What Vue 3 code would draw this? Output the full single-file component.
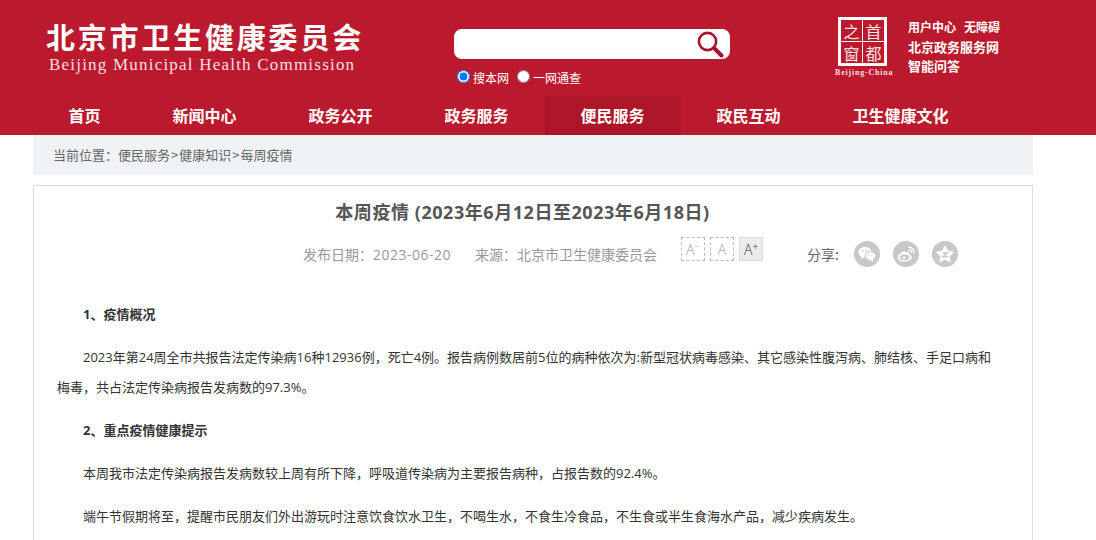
<script setup>
const navItems = ['首页', '新闻中心', '政务公开', '政务服务', '便民服务', '政民互动', '卫生健康文化']
const activeNav = '便民服务'
const crumbs = ['便民服务', '健康知识', '每周疫情']
</script>

<template>
  <div class="page">
    <header class="header">
      <div class="header-top">
        <div class="brand">
          <div class="brand-cn">北京市卫生健康委员会</div>
          <div class="brand-en">Beijing Municipal Health Commission</div>
        </div>
        <div class="search">
          <div class="search-box">
            <svg class="search-icon" width="28" height="28" viewBox="0 0 28 28">
              <circle cx="11.5" cy="11.5" r="8.6" fill="none" stroke="#a8132c" stroke-width="2.6" />
              <path d="M18 18 L25.5 25.5" stroke="#a8132c" stroke-width="4" stroke-linecap="round" />
            </svg>
          </div>
          <div class="search-scope">
            <label class="scope"><input type="radio" name="scope" checked />搜本网</label>
            <label class="scope"><input type="radio" name="scope" />一网通查</label>
          </div>
        </div>
        <div class="stamp">
          <div class="stamp-box">
            <span>之</span><span>首</span><span>窗</span><span>都</span>
          </div>
          <div class="stamp-en">Beijing-China</div>
        </div>
        <div class="quick-links">
          <div class="quick-row small"><a>用户中心</a><a>无障碍</a></div>
          <div class="quick-row"><a>北京政务服务网</a></div>
          <div class="quick-row"><a>智能问答</a></div>
        </div>
      </div>
      <nav class="nav">
        <a v-for="item in navItems" :key="item" class="nav-item" :class="{ active: item === activeNav }">{{ item }}</a>
      </nav>
    </header>

    <div class="crumbs">
      当前位置：<template v-for="(crumb, i) in crumbs" :key="crumb"><span v-if="i" class="crumb-sep">&gt;</span>{{ crumb }}</template>
    </div>

    <main class="article">
      <h1 class="title">本周疫情 (2023年6月12日至2023年6月18日)</h1>
      <div class="meta">
        <span class="meta-text">发布日期：<span class="meta-date">2023-06-20</span></span>
        <span class="meta-text source">来源：北京市卫生健康委员会</span>
        <div class="font-btns">
          <span class="font-btn">A<sup>−</sup></span>
          <span class="font-btn">A</span>
          <span class="font-btn on">A<sup>+</sup></span>
        </div>
        <span class="share-label">分享:</span>
        <div class="share-icons">
          <span class="share-icon">
            <svg width="20" height="20" viewBox="0 0 20 20">
              <ellipse cx="8" cy="8.2" rx="6.6" ry="5.4" fill="#fff" />
              <path d="M4.5 12 L4 15 L7.4 13z" fill="#fff" />
              <ellipse cx="13.4" cy="12" rx="5.4" ry="4.4" fill="#fff" stroke="#c8c8c8" stroke-width="1" />
              <path d="M15.5 15.5 L16.6 18 L13.6 16.2z" fill="#fff" />
              <circle cx="5.9" cy="6.8" r="0.9" fill="#c8c8c8" />
              <circle cx="9.9" cy="6.8" r="0.9" fill="#c8c8c8" />
              <circle cx="11.6" cy="11.2" r="0.7" fill="#c8c8c8" />
              <circle cx="15" cy="11.2" r="0.7" fill="#c8c8c8" />
            </svg>
          </span>
          <span class="share-icon">
            <svg width="20" height="20" viewBox="0 0 20 20">
              <path d="M8.6 7 C4.8 8 1.5 11 1.8 13.8 C2.1 16.6 5.6 18.2 9.2 17.8 C13 17.4 16 15.4 15.8 13 C15.6 11.4 14 11 13.2 10.6 C13.6 9.4 13.6 8.4 12.6 8 C11.6 7.6 10 8 8.8 8.6 C9.2 7.6 9.2 7 8.6 7z" fill="#fff" />
              <ellipse cx="8.6" cy="13.6" rx="4.6" ry="3" fill="#c8c8c8" />
              <circle cx="8" cy="13.8" r="1.6" fill="#fff" />
              <path d="M12.8 3.4 C15.8 3 18.4 5.4 17.8 8.8" fill="none" stroke="#fff" stroke-width="1.5" stroke-linecap="round" />
              <path d="M13.2 6 C14.6 5.8 15.8 6.8 15.5 8.4" fill="none" stroke="#fff" stroke-width="1.3" stroke-linecap="round" />
            </svg>
          </span>
          <span class="share-icon">
            <svg width="20" height="20" viewBox="0 0 20 20">
              <path d="M10 2.5 L12.4 7.6 L17.8 8.3 L13.8 12 L14.8 17.2 L10 14.6 L5.2 17.2 L6.2 12 L2.2 8.3 L7.6 7.6z" fill="#fff" stroke="#fff" stroke-width="1.6" stroke-linejoin="round" />
              <path d="M7.6 8.8 H12.2 L8 12.6 H12.6" fill="none" stroke="#c8c8c8" stroke-width="1.6" />
            </svg>
          </span>
        </div>
      </div>
      <div class="content">
        <p class="strong">1、疫情概况</p>
        <p>2023年第24周全市共报告法定传染病16种12936例，死亡4例。报告病例数居前5位的病种依次为:新型冠状病毒感染、其它感染性腹泻病、肺结核、手足口病和梅毒，共占法定传染病报告发病数的97.3%。</p>
        <p class="strong">2、重点疫情健康提示</p>
        <p>本周我市法定传染病报告发病数较上周有所下降，呼吸道传染病为主要报告病种，占报告数的92.4%。</p>
        <p>端午节假期将至，提醒市民朋友们外出游玩时注意饮食饮水卫生，不喝生水，不食生冷食品，不生食或半生食海水产品，减少疾病发生。</p>
      </div>
    </main>
  </div>
</template>

<style>
html, body {
  height: 540px;
  overflow: hidden;
  background: #fff;
}
</style>

<style scoped>
.page {
  font-family: "Open Sans", "Noto Sans CJK SC", sans-serif;
  color: #333;
}

.header {
  height: 135px;
  background: #bb1a2e;
  color: #fff;
}

.header-top {
  height: 96px;
  display: flex;
  padding-left: 46px;
}

.brand {
  width: 408px;
  padding-top: 19px;
}

.brand-cn {
  font-family: "Noto Sans CJK SC", sans-serif;
  font-size: 29px;
  line-height: 34px;
  font-weight: 700;
  letter-spacing: 2.8px;
  white-space: nowrap;
}

.brand-en {
  font-family: "Liberation Serif", serif;
  font-size: 17px;
  line-height: 20px;
  letter-spacing: 1.21px;
  margin-top: 2px;
  padding-left: 3px;
  color: #f6dfe2;
  white-space: nowrap;
}

.search {
  width: 383px;
  padding-top: 29px;
}

.search-box {
  width: 276px;
  height: 30px;
  background: #fff;
  border-radius: 8px;
  display: flex;
  align-items: center;
  justify-content: flex-end;
  padding-right: 6px;
  box-sizing: border-box;
}

.search-icon {
  display: block;
}

.search-scope {
  display: flex;
  gap: 8px;
  padding-left: 3px;
  margin-top: 10px;
}

.scope {
  display: flex;
  align-items: center;
  font-family: "Noto Sans CJK SC", sans-serif;
  font-size: 12px;
  line-height: 18px;
}

.scope input {
  width: 13px;
  height: 13px;
  margin: 0 3px 4px 0;
}

.stamp {
  width: 71px;
  padding-top: 17px;
  font-family: "Noto Sans CJK SC", sans-serif;
}

.stamp-box {
  width: 43px;
  height: 43px;
  margin-left: 1px;
  display: grid;
  grid-template-columns: 1fr 1fr;
  grid-template-rows: 1fr 1fr;
  gap: 1px;
  background: #fff;
  border: 3px solid #fff;
}

.stamp-box span {
  background: #bb1a2e;
  display: flex;
  align-items: center;
  justify-content: center;
  font-size: 16px;
  color: #f6e3e5;
  line-height: 1;
}

.stamp-en {
  font-family: "Liberation Serif", serif;
  font-size: 8px;
  line-height: 10px;
  font-weight: 700;
  letter-spacing: 0.8px;
  margin-top: 2px;
  margin-left: -2px;
  white-space: nowrap;
  color: #f6dfe2;
}

.quick-links {
  padding-top: 17px;
  font-family: "Noto Sans CJK SC", sans-serif;
  font-size: 13px;
  font-weight: 700;
}

.quick-row {
  display: flex;
  gap: 8px;
  height: 19.5px;
  line-height: 20px;
  white-space: nowrap;
}

.quick-row.small {
  font-size: 12px;
}

.nav {
  height: 39px;
  display: flex;
  margin-left: 32.5px;
}

.nav-item {
  padding: 0 36px;
  font-family: "Noto Sans CJK SC", sans-serif;
  font-size: 16px;
  font-weight: 700;
  line-height: 38px;
  white-space: nowrap;
}

.nav-item.active {
  background: #ad1529;
}

.crumbs {
  width: 1000px;
  height: 40px;
  box-sizing: border-box;
  margin-left: 33px;
  padding-left: 20px;
  background: #eff3f6;
  font-family: "Noto Sans CJK SC", sans-serif;
  font-size: 13px;
  line-height: 40px;
  color: #666;
}

.crumb-sep {
  padding: 0 1px;
}

.article {
  width: 1000px;
  box-sizing: border-box;
  margin: 10px 0 0 33px;
  border: 1px solid #ddd;
  padding: 0 23px;
}

.title {
  margin: 0;
  padding: 13px 21px 0 0;
  text-align: center;
  font-family: "Open Sans", "Noto Sans CJK SC", sans-serif;
  font-size: 18px;
  line-height: 26px;
  font-weight: 700;
  letter-spacing: 0.55px;
  color: #555;
}

.meta {
  display: flex;
  align-items: center;
  height: 34px;
  margin-top: 12px;
  padding-left: 246px;
  font-family: "Noto Sans CJK SC", sans-serif;
}

.meta-text {
  font-size: 14px;
  color: #999;
  white-space: nowrap;
}

.meta-date {
  font-family: "Open Sans", sans-serif;
  letter-spacing: 0.5px;
}

.source {
  margin-left: 24px;
}

.font-btns {
  display: flex;
  gap: 5px;
  margin-left: 24px;
  margin-top: -10px;
}

.font-btn {
  width: 24px;
  height: 24px;
  box-sizing: border-box;
  border: 1px dashed #bbb;
  color: #999;
  font-family: "Open Sans", sans-serif;
  font-weight: 300;
  font-size: 14px;
  line-height: 23px;
  text-align: center;
}

.font-btn.on {
  border: 1px solid #ddd;
  background: #ececec;
  color: #333;
}

.font-btn sup {
  font-size: 10px;
  line-height: 0;
  vertical-align: 5px;
}

.share-label {
  width: 34px;
  margin-left: 44px;
  font-size: 14px;
  color: #666;
  white-space: nowrap;
}

.share-icons {
  display: flex;
  gap: 13px;
  margin-left: 13px;
}

.share-icon {
  width: 26px;
  height: 26px;
  border-radius: 50%;
  background: #c8c8c8;
  display: flex;
  align-items: center;
  justify-content: center;
}

.content {
  margin-top: 28px;
  padding-right: 9px;
  font-family: "Open Sans", "Noto Sans CJK SC", sans-serif;
  font-size: 13px;
  line-height: 30px;
  color: #333;
}

.content p {
  margin: 0 0 13px;
  text-indent: 26px;
}

.content .strong {
  font-weight: 700;
}
</style>
